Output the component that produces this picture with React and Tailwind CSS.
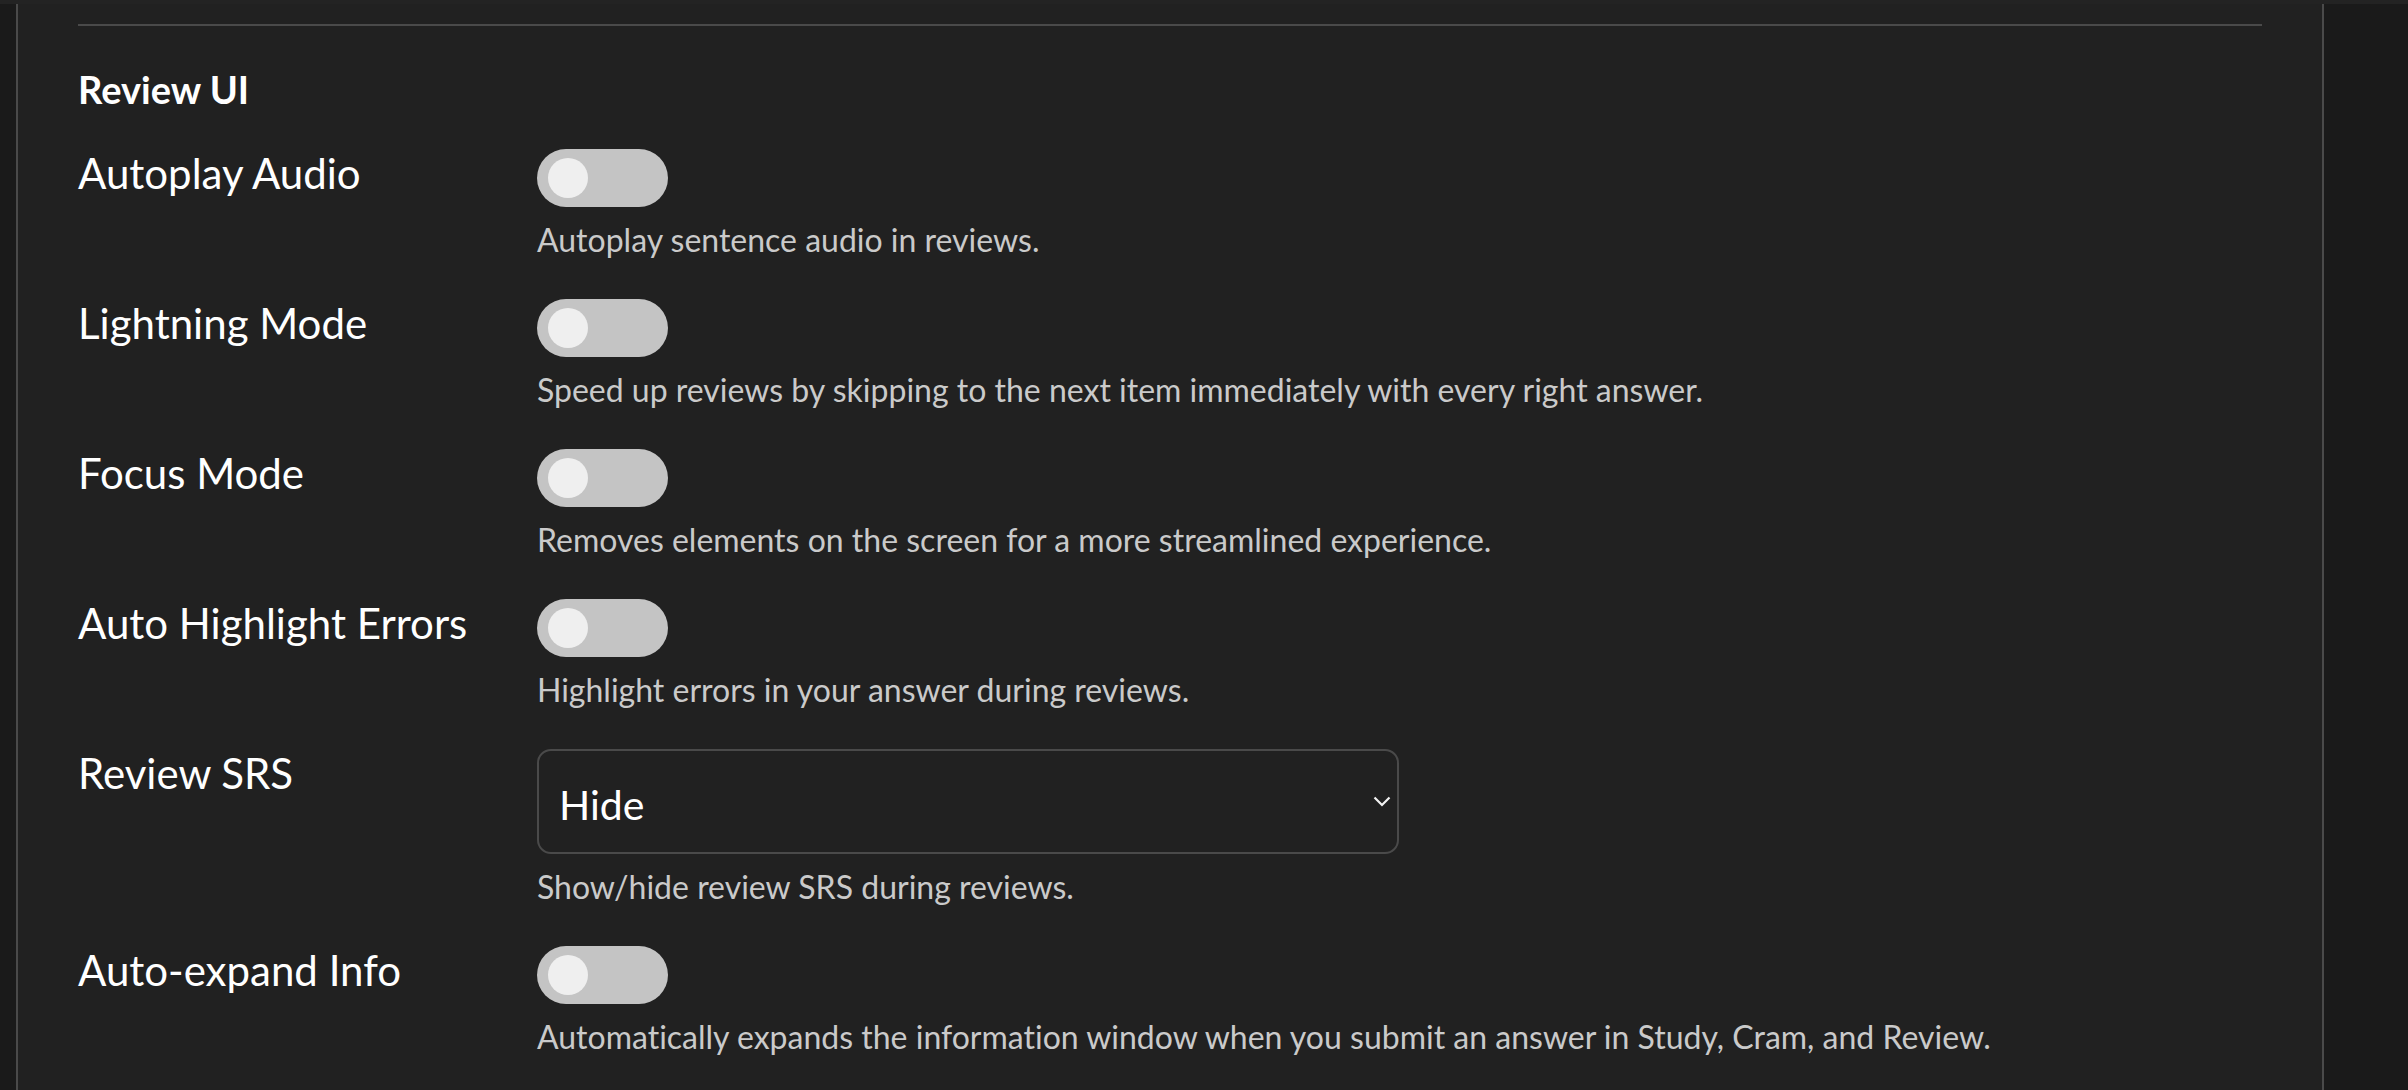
import React from 'react';

const rows = [
  { label: 'Autoplay Audio', desc: 'Autoplay sentence audio in reviews.' },
  { label: 'Lightning Mode', desc: 'Speed up reviews by skipping to the next item immediately with every right answer.' },
  { label: 'Focus Mode', desc: 'Removes elements on the screen for a more streamlined experience.' },
  { label: 'Auto Highlight Errors', desc: 'Highlight errors in your answer during reviews.' },
  { label: 'Review SRS', desc: 'Show/hide review SRS during reviews.', select: 'Hide' },
  { label: 'Auto-expand Info', desc: 'Automatically expands the information window when you submit an answer in Study, Cram, and Review.' },
];

function Toggle() {
  return (
    <div className="flex items-center w-[131px] h-[58px] rounded-full bg-[#c4c4c4] pl-[11px]">
      <div className="w-[40px] h-[40px] rounded-full bg-[#efefef]" />
    </div>
  );
}

function Select({ value }) {
  return (
    <div className="flex items-center justify-between w-[862px] h-[105px] rounded-[14px] border-2 border-[#4a4a4a] pl-[20px] pr-[6px]">
      <span className="text-[41px] leading-[1.2] text-white pt-[6px]">{value}</span>
      <svg width="18" height="11" viewBox="0 0 18 11" fill="none">
        <path d="M1.5 1.5 L9 9 L16.5 1.5" stroke="#f2f2f2" strokeWidth="2.2" />
      </svg>
    </div>
  );
}

function Row({ label, desc, select }) {
  return (
    <div className="flex pb-[41px]">
      <div className="w-[459px] shrink-0 text-[42px] leading-[48px] text-white">{label}</div>
      <div className="flex flex-col">
        {select ? <Select value={select} /> : <Toggle />}
        <p className="mt-[15px] text-[32px] leading-[36px] text-[#cacaca]">{desc}</p>
      </div>
    </div>
  );
}

export default function App() {
  return (
    <div className="w-[2408px] h-[1090px] overflow-hidden flex flex-col bg-[#222222] font-['Lato',sans-serif] [font-variant-ligatures:none]">
      <div className="h-[4px] shrink-0 bg-[#232323]" />
      <div className="flex flex-1">
        <div className="w-[18px] shrink-0 bg-[#1a1a1a] border-r-2 border-[#4a4a4a]" />
        <div className="flex-1 bg-[#212121] px-[60px] pt-[20px]">
          <div className="h-[2px] bg-[#4a4a4a]" />
          <h2 className="mt-[43px] mb-[39px] text-[38px] leading-[41px] font-bold text-white">Review UI</h2>
          {rows.map((r) => (
            <Row key={r.label} {...r} />
          ))}
        </div>
        <div className="w-[86px] shrink-0 bg-[#1a1a1a] border-l-2 border-[#4a4a4a]" />
      </div>
    </div>
  );
}
